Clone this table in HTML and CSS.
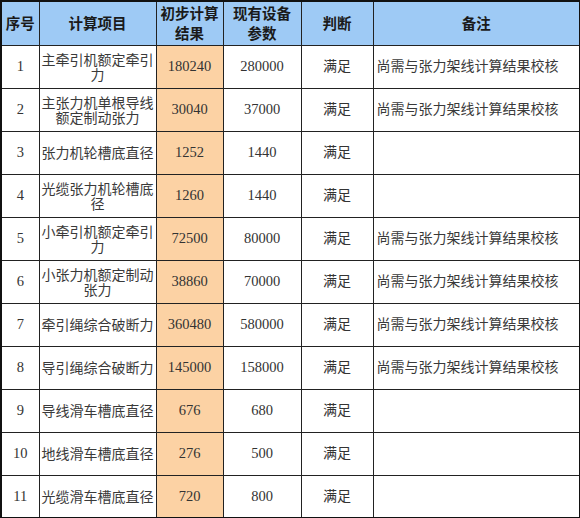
FILE: index.html
```html
<!DOCTYPE html>
<html lang="zh">
<head>
<meta charset="utf-8">
<link rel="stylesheet" href="styles.css">
</head>
<body>
<table class="tbl">
  <colgroup>
    <col class="c1"><col class="c2"><col class="c3"><col class="c4"><col class="c5"><col class="c6">
  </colgroup>
  <thead>
    <tr class="head">
      <th>序号</th>
      <th>计算项目</th>
      <th>初步计算<br>结果</th>
      <th>现有设备<br>参数</th>
      <th>判断</th>
      <th>备注</th>
    </tr>
  </thead>
  <tbody>
    <tr><td class="num">1</td><td class="item">主牵引机额定牵引力</td><td class="calc num">180240</td><td class="num">280000</td><td>满足</td><td class="note">尚需与张力架线计算结果校核</td></tr>
    <tr><td class="num">2</td><td class="item">主张力机单根导线额定制动张力</td><td class="calc num">30040</td><td class="num">37000</td><td>满足</td><td class="note">尚需与张力架线计算结果校核</td></tr>
    <tr><td class="num">3</td><td class="item">张力机轮槽底直径</td><td class="calc num">1252</td><td class="num">1440</td><td>满足</td><td class="note"></td></tr>
    <tr><td class="num">4</td><td class="item">光缆张力机轮槽底径</td><td class="calc num">1260</td><td class="num">1440</td><td>满足</td><td class="note"></td></tr>
    <tr><td class="num">5</td><td class="item">小牵引机额定牵引力</td><td class="calc num">72500</td><td class="num">80000</td><td>满足</td><td class="note">尚需与张力架线计算结果校核</td></tr>
    <tr><td class="num">6</td><td class="item">小张力机额定制动张力</td><td class="calc num">38860</td><td class="num">70000</td><td>满足</td><td class="note">尚需与张力架线计算结果校核</td></tr>
    <tr><td class="num">7</td><td class="item">牵引绳综合破断力</td><td class="calc num">360480</td><td class="num">580000</td><td>满足</td><td class="note">尚需与张力架线计算结果校核</td></tr>
    <tr><td class="num">8</td><td class="item">导引绳综合破断力</td><td class="calc num">145000</td><td class="num">158000</td><td>满足</td><td class="note">尚需与张力架线计算结果校核</td></tr>
    <tr><td class="num">9</td><td class="item">导线滑车槽底直径</td><td class="calc num">676</td><td class="num">680</td><td>满足</td><td class="note"></td></tr>
    <tr><td class="num">10</td><td class="item">地线滑车槽底直径</td><td class="calc num">276</td><td class="num">500</td><td>满足</td><td class="note"></td></tr>
    <tr><td class="num">11</td><td class="item">光缆滑车槽底直径</td><td class="calc num">720</td><td class="num">800</td><td>满足</td><td class="note"></td></tr>
  </tbody>
</table>
</body>
</html>
```

FILE: styles.css
```css
html, body {
  margin: 0;
  padding: 0;
  background: #ffffff;
}

.tbl {
  border-collapse: collapse;
  table-layout: fixed;
  width: 579px;
  border: 2px solid #111111;
  font-family: "Liberation Serif", "Noto Sans CJK SC", serif;
  font-size: 14px;
  color: #333333;
}

.c1 { width: 38px; }
.c2 { width: 117px; }
.c3 { width: 67px; }
.c4 { width: 78px; }
.c5 { width: 72px; }
.c6 { width: 207px; }

.tbl th,
.tbl td {
  border: 1px solid #222222;
  padding: 0 2px;
  text-align: center;
  vertical-align: middle;
  overflow: hidden;
}

.head {
  height: 44px;
  background: #9ecaf5;
}

.head th {
  font-family: "Noto Sans CJK SC", sans-serif;
  font-weight: 700;
  font-size: 14.5px;
  line-height: 20px;
  color: #1a1a1a;
}

.tbl tbody tr {
  height: 43px;
}

.tbl td {
  line-height: 15px;
}

.num {
  font-family: "Liberation Serif", serif;
  font-size: 14.5px;
}

.item {
  font-family: "Noto Sans CJK SC", sans-serif;
  font-size: 14px;
  font-weight: 400;
  color: #3a3a3a;
}

.calc {
  background: #fcd2a4;
}

.tbl td.note {
  text-align: left;
  padding-left: 3px;
  color: #3a3a3a;
}
```
